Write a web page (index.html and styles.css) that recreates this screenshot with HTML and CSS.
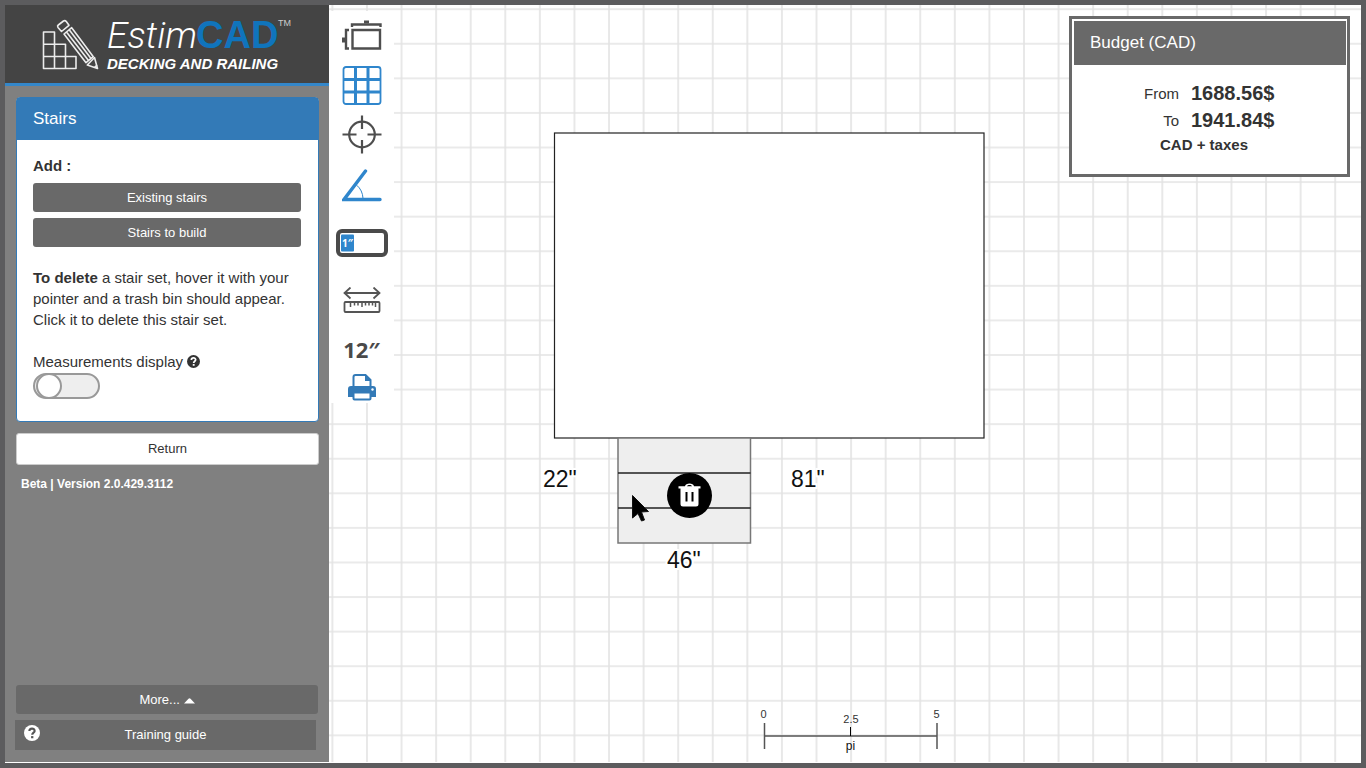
FILE: index.html
```html
<!DOCTYPE html>
<html lang="en">
<head>
<meta charset="utf-8">
<title>EstimCAD</title>
<link rel="stylesheet" href="styles.css">
</head>
<body>
<div class="app">
  <aside class="sidebar">
    <header class="brand">
      <svg class="logo" width="324" height="78" viewBox="0 0 324 78" role="img" aria-label="EstimCAD Decking and Railing">
        <g fill="none" stroke="#ececec" stroke-width="1.600" stroke-linejoin="round">
          <path d="M38.500 27H49.500V39.300H60.500V51.500H71V63.500H38.500ZM38.500 39.300H49.500V63.500M38.500 51.500H60.500V63.500"/>
          <path d="M53 22.500Q52 21 53.300 20L58.500 16Q60 15 61.300 16.500L64 20.300L56.500 26.500Z"/>
          <path d="M59 29L66.700 22.700L88.300 51.700L81 57.700ZM61.500 27L83.500 55.500M64.200 24.800L86 53.500" fill="#444"/>
          <path d="M82.300 60L89.500 52.500L92.500 63.500Z"/>
          <path d="M89.500 62.500L92 60"/>
        </g>
        <text class="logo-light" x="102" y="43">Estim</text>
        <text class="logo-bold" x="191" y="43">CAD</text>
        <text class="logo-tm" x="273" y="21">TM</text>
        <text class="logo-sub" x="102" y="64">DECKING AND RAILING</text>
      </svg>
    </header>

    <div class="side-body">
      <section class="panel">
        <h2 class="panel-title">Stairs</h2>
        <div class="panel-body">
          <strong class="add-label">Add :</strong>
          <button class="btn" type="button">Existing stairs</button>
          <button class="btn" type="button">Stairs to build</button>
          <p class="hint"><b>To delete</b> a stair set, hover it with your pointer and a trash bin should appear. Click it to delete this stair set.</p>
          <label class="switch-label" for="measures">Measurements display
            <svg width="13" height="13" viewBox="0 0 14 14"><circle cx="7" cy="7" r="7" fill="#333"/><path d="M4.700 5.300C4.800 2.500 9.300 2.500 9.300 5.200C9.300 6.800 7.200 6.700 7.200 8.600" fill="none" stroke="#fff" stroke-width="1.900"/><path d="M6.200 9.700h2v1.900h-2z" fill="#fff"/></svg>
          </label>
          <input class="switch" id="measures" type="checkbox">
        </div>
      </section>
      <button class="btn-return" type="button">Return</button>
      <p class="version">Beta | Version 2.0.429.3112</p>
      <footer class="side-foot">
        <button class="btn" type="button">More...
          <svg width="11" height="6" viewBox="0 0 11 6"><path d="M0 5.500L4.500 .7Q5.500 0 6.500 .7L11 5.500Z" fill="#fff"/></svg>
        </button>
        <button class="btn guide" type="button">
          <svg class="guide-icon" width="16" height="16" viewBox="0 0 14 14"><circle cx="7" cy="7" r="7" fill="#fff"/><path d="M4.700 5.300C4.800 2.500 9.300 2.500 9.300 5.200C9.300 6.800 7.200 6.700 7.200 8.600" fill="none" stroke="#555" stroke-width="1.900"/><path d="M6.200 9.700h2v1.900h-2z" fill="#555"/></svg>
          Training guide
        </button>
      </footer>
    </div>
  </aside>

  <main class="stage">
    <svg class="drawing" width="100%" height="100%">
      <defs>
        <pattern id="grid" x="2.400" y="3.200" width="34.580" height="34.580" patternUnits="userSpaceOnUse">
          <path d="M1 0V34.580M0 1H34.580" stroke="#000" stroke-opacity=".11" stroke-width="1.600"/>
        </pattern>
      </defs>
      <rect width="100%" height="100%" fill="url(#grid)"/>
      <rect x="225.500" y="128" width="429.500" height="305" fill="#fff" stroke="#222" stroke-width="1.200"/>
      <rect x="289" y="433" width="132.500" height="105" fill="#eee" stroke="#777" stroke-width="1.500"/>
      <path d="M289 468H421.500M289 503H421.500" stroke="#222" stroke-width="1.300"/>
      <g class="measure">
        <text x="214" y="482">22"</text>
        <text x="462" y="482">81"</text>
        <text x="338" y="563">46"</text>
      </g>
      <path d="M303.500 490.500V513L309 508.500L312.500 516L315.500 515L312.500 507L319.500 506.500Z" fill="#000" stroke="#111"/>
      <path d="M435.500 718V744M608 718V744M435.500 731H608" fill="none" stroke="#555" stroke-width="1.500"/>
      <path d="M521.500 722V731" stroke="#000"/>
      <g class="scale">
        <text x="434.500" y="713">0</text>
        <text x="522" y="718">2.5</text>
        <text x="607.500" y="713">5</text>
        <text class="unit" x="521.500" y="745">pi</text>
      </g>
    </svg>

    <button class="trash" type="button" aria-label="Delete stair set">
      <svg width="45" height="45" viewBox="0 0 45 45"><circle cx="22.500" cy="22.500" r="22.500" fill="#000"/><path d="M11.500 13.200H18C18.500 9.500 26.500 9.500 27 13.200H33.500V15.500H31.500V31Q31.500 33.500 29 33.500H16Q13.500 33.500 13.500 31V15.500H11.500ZM20 13.200H25C24.500 11.700 20.500 11.700 20 13.200ZM18.500 19V28.500H20.500V19ZM24.500 19V28.500H26.500V19Z" fill="#fff" fill-rule="evenodd"/></svg>
    </button>

    <nav class="toolbar">
      <button class="tool" type="button" aria-label="Deck">
        <svg width="40" height="32" viewBox="0 0 40 32" fill="none" stroke="#4e4e4e" stroke-width="2.400"><path d="M10.500 10H38V28.500H10.500ZM10 7V4.500H38.500V7M7 10H4V28.500H7"/><path d="M22 2H27M1.500 17.500V22.500" stroke-width="3"/></svg>
      </button>
      <button class="tool" type="button" aria-label="Grid">
        <svg width="40" height="40" viewBox="0 0 40 40" fill="none" stroke="#2f86cc"><rect x="1.500" y="1" width="37" height="37" rx="2.500" stroke-width="1.800"/><path d="M13.500 1V38M26 1V38M1 13.500H39M1 26H39" stroke-width="3"/></svg>
      </button>
      <button class="tool" type="button" aria-label="Center">
        <svg width="40" height="42" viewBox="0 0 40 42" fill="none" stroke="#4e4e4e" stroke-width="2.200"><circle cx="20" cy="19.500" r="12.800"/><path d="M20 .5V14M20 25V38.500M.5 19.500H14.500M25.500 19.500H39.500"/></svg>
      </button>
      <button class="tool" type="button" aria-label="Angle">
        <svg width="40" height="36" viewBox="0 0 40 36" fill="none" stroke="#2f86cc" stroke-width="3.400" stroke-linecap="round"><path d="M23.500 3L2 31.500H38"/><path d="M15 17.500Q20.500 22 21 30" stroke-width="1"/></svg>
      </button>
      <button class="tool tool-tall" type="button" aria-label="Step of one inch">
        <svg width="52" height="28" viewBox="0 0 52 28"><rect x="2" y="2" width="48" height="24" rx="4" fill="#fff" stroke="#4a4a4a" stroke-width="4"/><rect x="5" y="5.500" width="13" height="17" rx="1" fill="#2f86cc"/><text class="inch" x="6" y="18">1″</text></svg>
      </button>
      <button class="tool" type="button" aria-label="Ruler">
        <svg width="38" height="26" viewBox="0 0 38 26" fill="none" stroke="#555" stroke-width="1.800"><path d="M1.500 6H36.500M7.500 .5L1.500 6L7.500 11.500M30.500 .5L36.500 6L30.500 11.500"/><rect x="1.500" y="15" width="35" height="10" rx="1"/><path d="M7.500 15V20M11.500 15V18.500M15 15V18.500M19 15V20M22.500 15V18.500M26 15V18.500M29.500 15V18.500M32.500 15V20" stroke-width="1.500"/></svg>
      </button>
      <button class="tool tool-text" type="button">12″</button>
      <button class="tool tool-short" type="button" aria-label="Print">
        <svg width="28" height="28" viewBox="0 0 28 28"><path d="M5.500 13V3Q5.500 1 7.500 1H17.500L22.500 6V13" fill="#fff" stroke="#337ab7" stroke-width="2"/><path d="M17 1V7H23L22 5.500L18.500 2ZM3 12H25Q28 12 28 15V23H23V20H5V23H0V15Q0 12 3 12Z" fill="#337ab7"/><rect x="5.500" y="18.500" width="17" height="7" rx="1" fill="#fff" stroke="#337ab7" stroke-width="2"/><circle cx="24.500" cy="15.500" r="1.200" fill="#fff"/></svg>
      </button>
    </nav>

    <section class="budget">
      <h2 class="budget-title">Budget (CAD)</h2>
      <dl class="amounts">
        <dt>From</dt><dd>1688.56$</dd>
        <dt>To</dt><dd>1941.84$</dd>
      </dl>
      <p class="taxes">CAD + taxes</p>
    </section>
  </main>
</div>
</body>
</html>
```
FILE: styles.css
```css
*, *::before { box-sizing: border-box; }

body {
  margin: 0;
  font: 15px/21px "Liberation Sans", Arial, sans-serif;
  color: #333;
}

h2, p, dl, dd { margin: 0; }

button { font: inherit; cursor: pointer; }

.app {
  display: flex;
  min-height: 100vh;
  border: 5px solid #5c5c5e;
  padding-bottom: 1px;
  background: #fff;
}

/* Sidebar */
.sidebar {
  display: flex;
  flex-direction: column;
  flex: 0 0 324px;
  background: #808080;
}

.brand {
  background: #444;
  border-bottom: 3px solid #3487ca;
}

.logo { display: block; }
.logo-light { font: italic 300 37px Roboto, sans-serif; fill: #fff; }
.logo-bold { font: bold 38px "Liberation Sans", sans-serif; fill: #1074bc; }
.logo-tm { font: 9px "Liberation Sans", sans-serif; fill: #ccc; }
.logo-sub { font: italic bold 15px "Liberation Sans", sans-serif; fill: #fff; }

.side-body {
  display: flex;
  flex-direction: column;
  flex: 1;
  padding: 11px 10px 12px 11px;
}

.panel {
  border: 1px solid #337ab7;
  border-radius: 4px;
  background: #fff;
}

.panel-title {
  padding: 10px 16px 11px;
  background: #337ab7;
  color: #fff;
  font-size: 17px;
  font-weight: 400;
}

.panel-body {
  display: flex;
  flex-direction: column;
  padding: 15px 17px 22px 16px;
}

.add-label { margin-bottom: 7px; }

.btn {
  height: 29px;
  margin-bottom: 6px;
  padding: 0;
  border: 0;
  border-radius: 3px;
  background: #696969;
  color: #fff;
  font-size: 13px;
}

.hint { margin: 14px 0 21px; }

.switch-label { margin-bottom: 1px; }
.switch-label svg { vertical-align: -1px; }

.switch {
  appearance: none;
  width: 67px;
  height: 26px;
  margin: 0;
  border: 2px solid #999;
  border-radius: 13px;
  background: #eee;
}

.switch::before {
  content: "";
  display: block;
  width: 26px;
  height: 26px;
  margin: -2px 0 0 1px;
  border: 2px solid #999;
  border-radius: 50%;
  background: #fff;
}

.switch:checked::before { margin-left: 38px; }

.btn-return {
  height: 32px;
  margin-top: 11px;
  padding: 0 0 2px;
  border: 1px solid #ccc;
  border-radius: 3px;
  background: #fff;
  color: #333;
  font-size: 13px;
}

.version {
  margin: 9px 5px;
  color: #fff;
  font-size: 12px;
  font-weight: 700;
}

.side-foot {
  display: flex;
  flex-direction: column;
  margin: auto 1px 0 0;
}

.guide {
  position: relative;
  height: 30px;
  margin: 0 2px 0 -1px;
  padding-bottom: 2px;
  border-radius: 0;
}

.guide-icon { position: absolute; left: 9px; top: 5px; }

/* Drawing area */
.stage {
  position: relative;
  flex: 1;
  overflow: hidden;
}

.drawing {
  position: absolute;
  inset: 0;
}

.measure {
  font-size: 23px;
  fill: #111;
  stroke: #fff;
  stroke-width: 4px;
  paint-order: stroke;
}

.scale { font-size: 11px; fill: #333; text-anchor: middle; }
.unit { font-size: 12px; fill: #111; }

.trash {
  position: absolute;
  left: 338px;
  top: 468px;
  padding: 0;
  border: 0;
  background: none;
}

.trash svg { display: block; }

.toolbar {
  position: absolute;
  left: 0;
  top: 6px;
  display: flex;
  flex-direction: column;
  width: 65px;
  background: #fff;
}

.tool {
  display: flex;
  align-items: center;
  justify-content: center;
  height: 50px;
  padding: 0;
  border: 0;
  background: none;
}

.tool-tall { height: 64px; }
.tool-short { height: 30px; }

.tool-text {
  height: 48px;
  color: #4a4a4a;
  font: bold 22px/24px "Open Sans", sans-serif;
}

.inch { font: bold 10px "Open Sans", sans-serif; fill: #fff; }

/* Budget */
.budget {
  position: absolute;
  right: 11px;
  top: 11px;
  width: 281px;
  padding: 2px 1px 19px 2px;
  border: 3px solid #696969;
  background: #fff;
}

.budget-title {
  padding: 11px 16px 12px;
  background: #696969;
  color: #fff;
  font-size: 17px;
  font-weight: 400;
}

.amounts {
  display: grid;
  grid-template-columns: 105px 1fr;
  column-gap: 12px;
  padding-top: 15px;
  line-height: 27px;
}

.amounts dt { text-align: right; }
.amounts dd { font-size: 20px; font-weight: 700; }

.taxes {
  padding-right: 12px;
  text-align: center;
  font-weight: 700;
}
```
